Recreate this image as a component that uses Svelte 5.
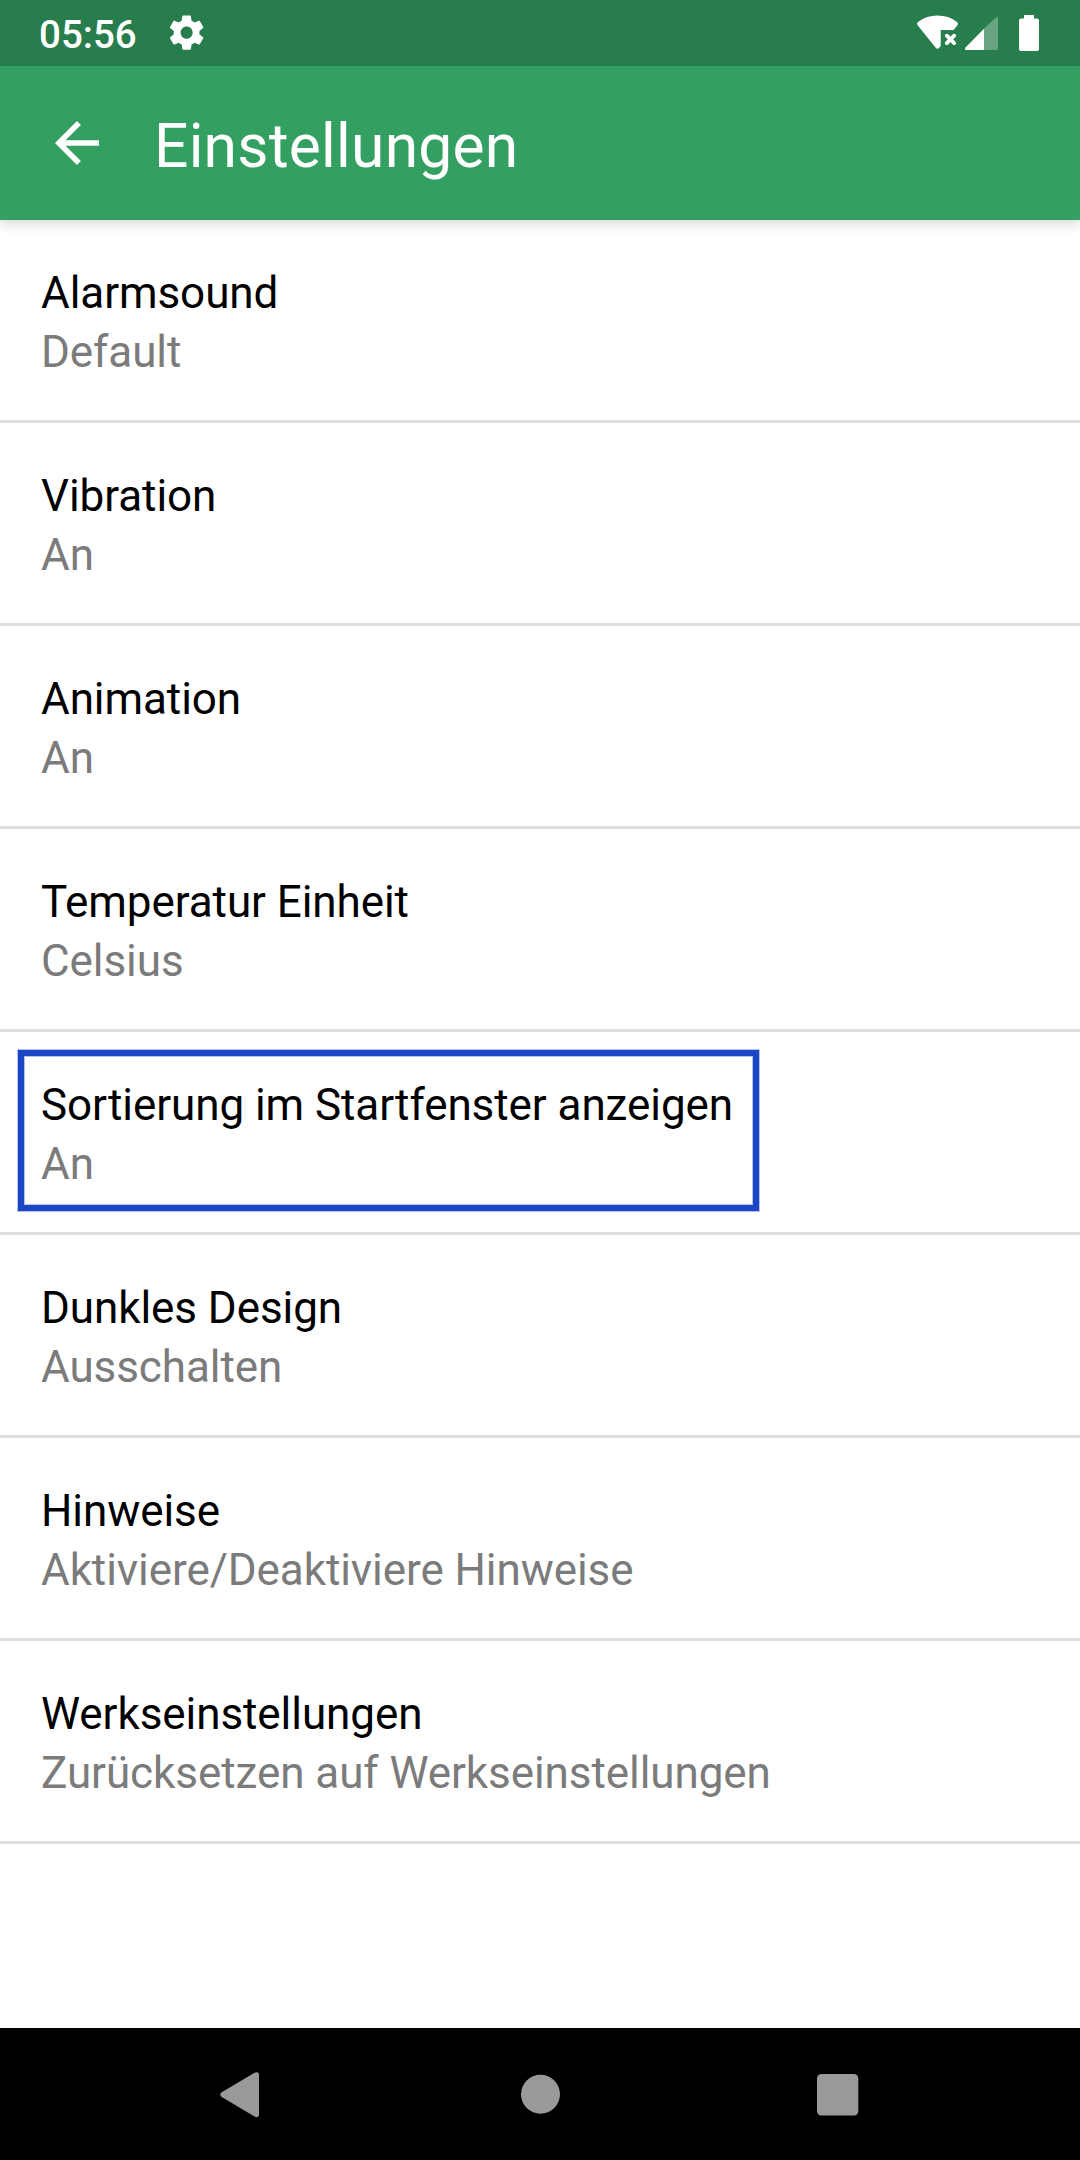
<script>
  const settings = [
    { title: 'Alarmsound', value: 'Default' },
    { title: 'Vibration', value: 'An' },
    { title: 'Animation', value: 'An' },
    { title: 'Temperatur Einheit', value: 'Celsius' },
    { title: 'Sortierung im Startfenster anzeigen', value: 'An', marked: true },
    { title: 'Dunkles Design', value: 'Ausschalten' },
    { title: 'Hinweise', value: 'Aktiviere/Deaktiviere Hinweise' },
    { title: 'Werkseinstellungen', value: 'Zurücksetzen auf Werkseinstellungen' }
  ];
</script>

<div class="screen">
  <div class="status">
    <span class="clock">05:56</span>
    <svg class="gear" viewBox="0 0 24 24">
      <path d="M19.43 12.98c.04-.32.07-.64.07-.98s-.03-.66-.07-.98l2.11-1.65c.19-.15.24-.42.12-.64l-2-3.46c-.12-.22-.39-.3-.61-.22l-2.49 1c-.52-.4-1.08-.73-1.69-.98l-.38-2.65C14.46 2.18 14.25 2 14 2h-4c-.25 0-.46.18-.49.42l-.38 2.65c-.61.25-1.17.59-1.69.98l-2.49-1c-.23-.09-.49 0-.61.22l-2 3.46c-.13.22-.07.49.12.64l2.11 1.65c-.04.32-.07.65-.07.98s.03.66.07.98l-2.11 1.65c-.19.15-.24.42-.12.64l2 3.46c.12.22.39.3.61.22l2.49-1c.52.4 1.08.73 1.69.98l.38 2.65c.03.24.24.42.49.42h4c.25 0 .46-.18.49-.42l.38-2.65c.61-.25 1.17-.59 1.69-.98l2.49 1c.23.09.49 0 .61-.22l2-3.46c.12-.22.07-.49-.12-.64l-2.11-1.65zM12 15.5c-1.93 0-3.5-1.57-3.5-3.5s1.57-3.5 3.5-3.5 3.5 1.57 3.5 3.5-1.57 3.5-3.5 3.5z" />
    </svg>
    <svg class="indicators" viewBox="0 0 130 40">
      <path d="M7.6 12.2Q6.2 10.5 8 9Q16.500 2.600 27.500 2.600T47 9Q48.800 10.500 47.500 12.200L43.500 17H30.700V33L29.300 34.700Q27.500 36.700 25.700 34.700Z" />
      <path class="cross" d="M36.800 22.700L44.200 30.100M44.200 22.700L36.800 30.100" />
      <path class="weak" d="M74 15.500L86.200 4.300Q88 3 88 5V35.500Q88 37 86.500 37H74Z" />
      <path d="M74 15.800V37H56.300Q54 36.800 55.500 34.600Z" />
      <path d="M114 2H124V5.500H127Q129 5.500 129 7.500V36Q129 38 127 38H111Q109 38 109 36V7.500Q109 5.500 111 5.500H114Z" />
    </svg>
  </div>

  <header>
    <svg class="back" viewBox="0 0 24 24">
      <path d="M20 11H7.830l5.590-5.590L12 4l-8 8 8 8 1.410-1.410L7.830 13H20z" />
    </svg>
    <h1>Einstellungen</h1>
  </header>

  <main>
    {#each settings as item}
      <section class:marked={item.marked}>
        <div class="title">{item.title}</div>
        <div class="value">{item.value}</div>
      </section>
    {/each}
  </main>

  <nav>
    <svg viewBox="0 0 66 66">
      <path d="M11.300 31.500L44.500 11.700Q49 10 49 14V53.500Q49 57.300 44.500 55.600L11.300 35.800Q9.300 33.600 11.300 31.500Z" />
    </svg>
    <svg viewBox="0 0 66 66"><circle cx="33.500" cy="33.300" r="19.500" /></svg>
    <svg viewBox="0 0 66 66"><rect x="13" y="13" width="41.300" height="41.500" rx="4.500" /></svg>
  </nav>
</div>

<style>
  :global(body) {
    margin: 0;
    background: #fff;
  }
  .screen {
    width: 1080px;
    height: 2160px;
    display: flex;
    flex-direction: column;
    overflow: hidden;
    background: #fff;
    font-family: Roboto, sans-serif;
  }
  svg {
    display: block;
    flex: none;
    fill: #fff;
  }
  .status {
    height: 66px;
    flex: none;
    display: flex;
    align-items: center;
    box-sizing: border-box;
    padding: 0 40px 0 39px;
    background: #287d4c;
    color: #fff;
    z-index: 2;
  }
  .clock {
    width: 127px;
    padding-top: 3px;
    font-size: 38.5px;
    line-height: 46px;
    font-weight: 500;
  }
  .gear {
    width: 41.250px;
    height: 41.250px;
  }
  .indicators {
    width: 130px;
    height: 40px;
    margin-left: auto;
  }
  .cross {
    stroke: #fff;
    stroke-width: 3.800;
    stroke-linecap: round;
  }
  .weak {
    fill-opacity: 0.3;
  }
  header {
    height: 154px;
    flex: none;
    display: flex;
    align-items: center;
    box-sizing: border-box;
    padding-left: 44px;
    background: #339f60;
    color: #fff;
    box-shadow: 0 3px 12px rgba(0, 0, 0, 0.18);
    z-index: 1;
  }
  .back {
    width: 66px;
    height: 66px;
  }
  h1 {
    margin: 7px 0 0 44px;
    font-size: 60.500px;
    line-height: 72px;
    font-weight: 400;
    letter-spacing: 0.25px;
  }
  main {
    flex: 1;
  }
  section {
    position: relative;
    height: 203px;
    box-sizing: border-box;
    padding: 44px 41px 0;
    border-bottom: 3px solid #e0e0e0;
    font-size: 44px;
    line-height: 59px;
    letter-spacing: -0.07px;
    color: #000;
  }
  .value {
    color: #7b7b7b;
  }
  .marked::after {
    content: '';
    position: absolute;
    left: 18px;
    top: 18px;
    width: 729px;
    height: 149px;
    border: 6px solid #1b46c4;
    box-shadow: 0 0 0 1px #b4c2eb, inset 0 0 0 1px #b4c2eb;
  }
  nav {
    height: 132px;
    flex: none;
    display: flex;
    align-items: center;
    justify-content: center;
    gap: 231px;
    background: #000;
  }
  nav svg {
    width: 66px;
    height: 66px;
    fill: #999;
  }
</style>
